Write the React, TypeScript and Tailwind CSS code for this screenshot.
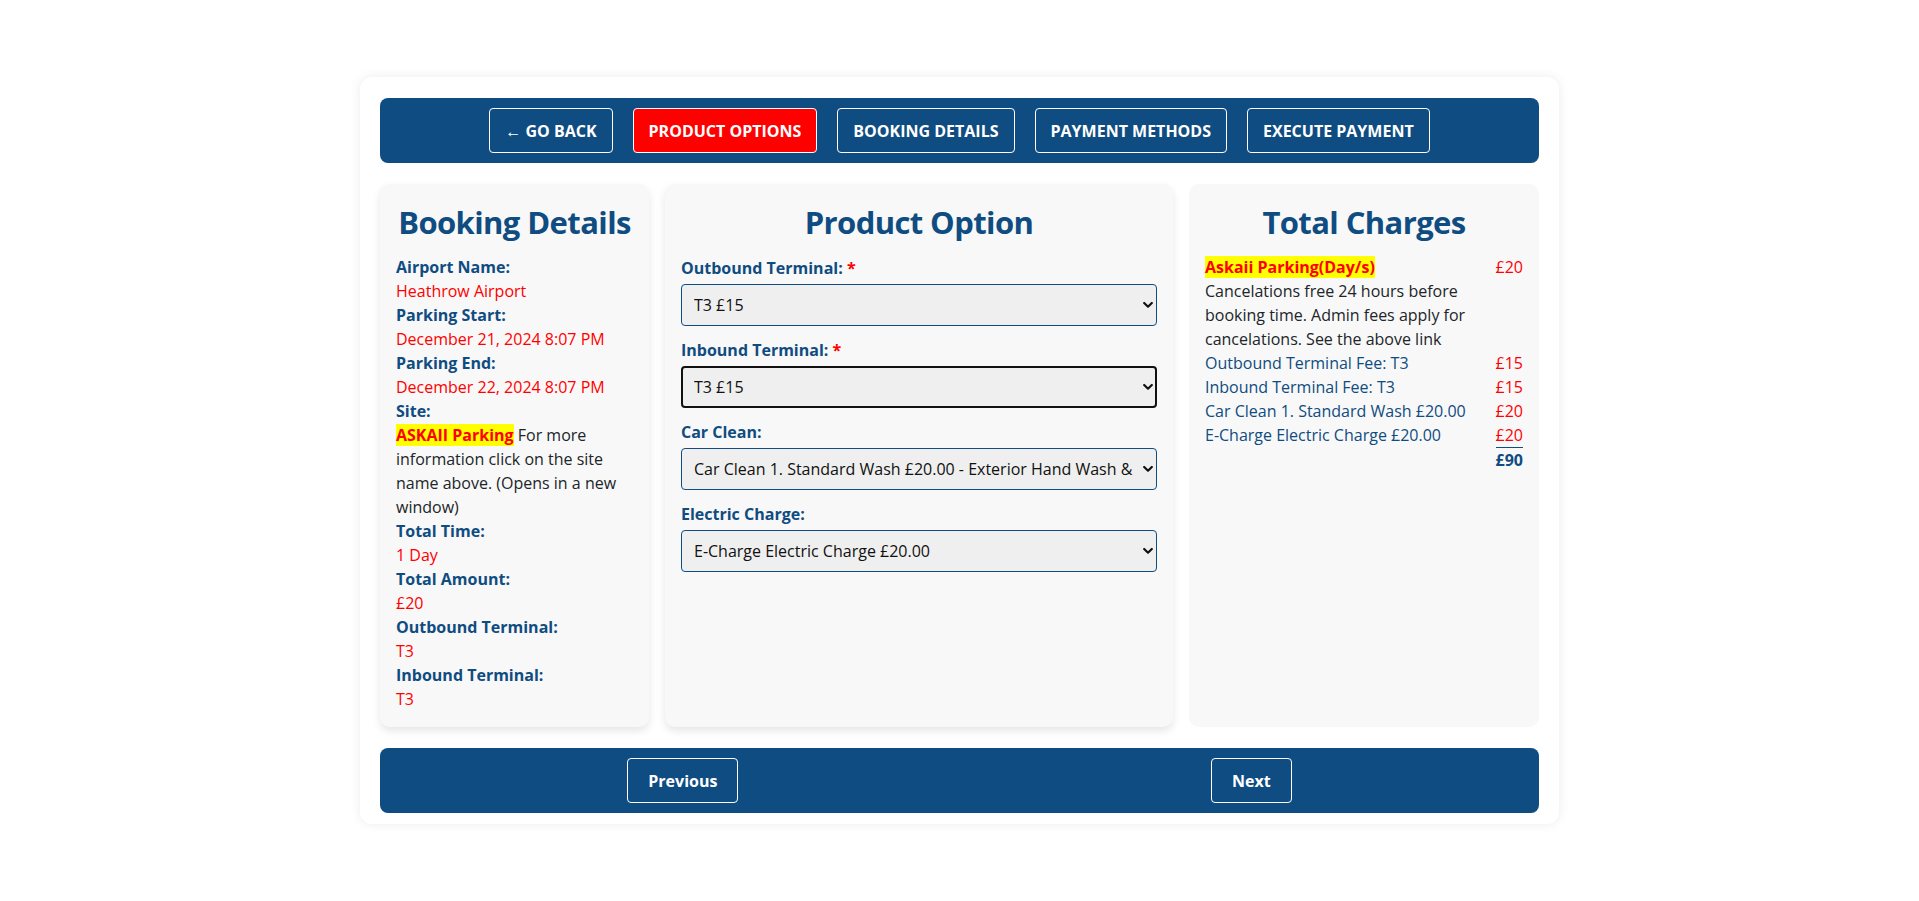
import React from "react";

function NavButton({ label, active }: { label: string; active?: boolean }) {
  return (
    <button
      className={
        active
          ? "h-[45px] rounded-[4px] border border-white bg-[#ff0000] px-[15px] text-[16px] font-bold uppercase leading-6 text-white"
          : "h-[45px] rounded-[4px] border border-white bg-transparent px-[15px] text-[16px] font-bold uppercase leading-6 text-white"
      }
    >
      {label}
    </button>
  );
}

function Chevron() {
  return (
    <svg
      className="pointer-events-none absolute right-[4px] top-1/2 -translate-y-1/2"
      width="10"
      height="7"
      viewBox="0 0 10 7"
    >
      <path d="M1.2 1.5 L5 5.2 L8.8 1.5" stroke="#111" strokeWidth="2.2" fill="none" strokeLinecap="round" strokeLinejoin="round" />
    </svg>
  );
}

function Select({ value, focused }: { value: string; focused?: boolean }) {
  return (
    <div className="relative mb-3">
      <select
        className={
          focused
            ? "block h-[42px] w-full appearance-none overflow-hidden rounded-[4px] border-2 border-[#111] bg-[#efefef] pl-[11px] pr-[22px] text-[16px] text-[#111]"
            : "block h-[42px] w-full appearance-none overflow-hidden rounded-[4px] border border-[#0f4c81] bg-[#efefef] pl-3 pr-[22px] text-[16px] text-[#111]"
        }
      >
        <option>{value}</option>
      </select>
      <Chevron />
    </div>
  );
}

function Label({ text, required }: { text: string; required?: boolean }) {
  return (
    <div className="mb-[4px] text-[16px] font-bold leading-6 text-[#0f4c81]">
      {text}
      {required && <span className="text-[#ff0000]"> *</span>}
    </div>
  );
}

export default function App() {
  return (
    <div className="min-h-screen bg-white pt-[77px] pb-10 font-['Open_Sans',sans-serif]">
      <div className="mx-auto w-[1199px] rounded-[12px] bg-white px-5 pt-[21px] pb-[11px] shadow-[0_0_12px_rgba(0,0,0,0.08)]">
        <nav className="flex h-[65px] items-center justify-center gap-5 rounded-lg bg-[#0f4c81]">
          <NavButton label="← Go Back" />
          <NavButton label="Product Options" active />
          <NavButton label="Booking Details" />
          <NavButton label="Payment Methods" />
          <NavButton label="Execute Payment" />
        </nav>

        <div className="mt-[21px] grid grid-cols-[269px_508px_1fr] gap-4">
          <div className="rounded-[10px] bg-[#f8f8f8] px-4 pt-[19px] pb-4 shadow-[0_4px_8px_rgba(0,0,0,0.1)]">
            <h2 className="mb-[14px] whitespace-nowrap text-center text-[31px] font-bold leading-[38px] tracking-[-0.6px] text-[#0f4c81]">
              Booking Details
            </h2>
            <div className="text-[16px] leading-6">
              <div className="font-bold text-[#0f4c81]">Airport Name:</div>
              <div className="text-[#ff0000]">Heathrow Airport</div>
              <div className="font-bold text-[#0f4c81]">Parking Start:</div>
              <div className="text-[#ff0000]">December 21, 2024 8:07 PM</div>
              <div className="font-bold text-[#0f4c81]">Parking End:</div>
              <div className="text-[#ff0000]">December 22, 2024 8:07 PM</div>
              <div className="font-bold text-[#0f4c81]">Site:</div>
              <div className="whitespace-nowrap text-[#212529]">
                <span className="bg-[#ffff00] font-bold text-[#ff0000]">ASKAII Parking</span> For more
                <br />
                information click on the site
                <br />
                name above. (Opens in a new
                <br />
                window)
              </div>
              <div className="font-bold text-[#0f4c81]">Total Time:</div>
              <div className="text-[#ff0000]">1 Day</div>
              <div className="font-bold text-[#0f4c81]">Total Amount:</div>
              <div className="text-[#ff0000]">£20</div>
              <div className="font-bold text-[#0f4c81]">Outbound Terminal:</div>
              <div className="text-[#ff0000]">T3</div>
              <div className="font-bold text-[#0f4c81]">Inbound Terminal:</div>
              <div className="text-[#ff0000]">T3</div>
            </div>
          </div>

          <div className="rounded-[10px] bg-[#f8f8f8] px-4 pt-[19px] pb-4 shadow-[0_4px_8px_rgba(0,0,0,0.1)]">
            <h2 className="mb-[15px] whitespace-nowrap text-center text-[31px] font-bold leading-[38px] tracking-[-0.6px] text-[#0f4c81]">
              Product Option
            </h2>
            <Label text="Outbound Terminal:" required />
            <Select value="T3 £15" />
            <Label text="Inbound Terminal:" required />
            <Select value="T3 £15" focused />
            <Label text="Car Clean:" />
            <Select value="Car Clean 1. Standard Wash £20.00 - Exterior Hand Wash & Interior Vacuum" />
            <Label text="Electric Charge:" />
            <Select value="E-Charge Electric Charge £20.00" />
          </div>

          <div className="rounded-[10px] bg-[#f8f8f8] px-4 pt-[19px] pb-4">
            <h2 className="mb-[14px] whitespace-nowrap text-center text-[31px] font-bold leading-[38px] tracking-[-0.6px] text-[#0f4c81]">
              Total Charges
            </h2>
            <div className="grid grid-cols-[1fr_auto] text-[16px] leading-6">
              <div>
                <span className="bg-[#ffff00] font-bold text-[#ff0000]">Askaii Parking(Day/s)</span>
              </div>
              <div className="text-right text-[#ff0000]">£20</div>
              <div className="whitespace-nowrap text-[#212529]">
                Cancelations free 24 hours before
                <br />
                booking time. Admin fees apply for
                <br />
                cancelations. See the above link
              </div>
              <div></div>
              <div className="text-[#0f4c81]">Outbound Terminal Fee: T3</div>
              <div className="text-right text-[#ff0000]">£15</div>
              <div className="text-[#0f4c81]">Inbound Terminal Fee: T3</div>
              <div className="text-right text-[#ff0000]">£15</div>
              <div className="text-[#0f4c81]">Car Clean 1. Standard Wash £20.00</div>
              <div className="text-right text-[#ff0000]">£20</div>
              <div className="text-[#0f4c81]">E-Charge Electric Charge £20.00</div>
              <div className="text-right text-[#ff0000]">£20</div>
              <div></div>
              <div className="border-t border-[#0f4c81] text-right font-bold text-[#0f4c81]">£90</div>
            </div>
          </div>
        </div>

        <div className="mt-[21px] flex h-[65px] items-center justify-around rounded-lg bg-[#0f4c81] px-[11px]">
          <button className="h-[45px] rounded-[4px] border border-white px-5 text-[16px] font-bold leading-6 text-white">
            Previous
          </button>
          <button className="h-[45px] rounded-[4px] border border-white px-5 text-[16px] font-bold leading-6 text-white">
            Next
          </button>
        </div>
      </div>
    </div>
  );
}
